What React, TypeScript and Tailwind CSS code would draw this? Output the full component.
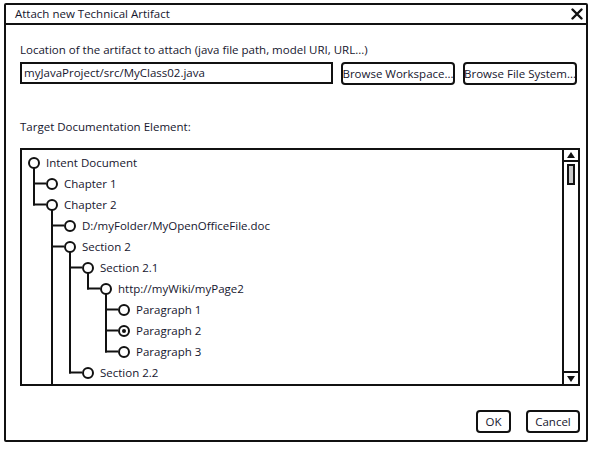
import React from "react";

type Row = {
  label: string;
  level: number;
  // one entry per ancestor column: "v" = line continues, "" = blank
  trail: string[];
  // connector for the row itself: "tee" or "end"
  joint?: "tee" | "end";
  selected?: boolean;
};

const rows: Row[] = [
  { label: "Intent Document", level: 0, trail: [] },
  { label: "Chapter 1", level: 1, trail: [], joint: "tee" },
  { label: "Chapter 2", level: 1, trail: [], joint: "end" },
  { label: "D:/myFolder/MyOpenOfficeFile.doc", level: 2, trail: [""], joint: "tee" },
  { label: "Section 2", level: 2, trail: [""], joint: "tee" },
  { label: "Section 2.1", level: 3, trail: ["", "v"], joint: "tee" },
  { label: "http://myWiki/myPage2", level: 4, trail: ["", "v", "v"], joint: "end" },
  { label: "Paragraph 1", level: 5, trail: ["", "v", "v", ""], joint: "tee" },
  { label: "Paragraph 2", level: 5, trail: ["", "v", "v", ""], joint: "tee", selected: true },
  { label: "Paragraph 3", level: 5, trail: ["", "v", "v", ""], joint: "end" },
  { label: "Section 2.2", level: 3, trail: ["", "v"], joint: "end" },
];

const Cell = ({ kind }: { kind: string }) => (
  <svg width="18" height="21" className="shrink-0 overflow-visible">
    {kind === "v" && <line x1="6" y1="-1" x2="6" y2="22" stroke="#111" strokeWidth="2" />}
    {kind === "tee" && (
      <>
        <line x1="6" y1="-5" x2="6" y2="22" stroke="#111" strokeWidth="2" />
        <line x1="6" y1="10.5" x2="18" y2="10.5" stroke="#111" strokeWidth="2" />
      </>
    )}
    {kind === "end" && (
      <>
        <line x1="6" y1="-5" x2="6" y2="11.5" stroke="#111" strokeWidth="2" />
        <line x1="5" y1="10.5" x2="18" y2="10.5" stroke="#111" strokeWidth="2" />
      </>
    )}
  </svg>
);

const Radio = ({ on }: { on?: boolean }) => (
  <span className="w-[12px] h-[12px] shrink-0 rounded-full border-2 border-[#111] bg-white flex items-center justify-center">
    {on && <span className="w-[4px] h-[4px] rounded-full bg-[#111]" />}
  </span>
);

const SketchButton = ({ children, className }: { children: React.ReactNode; className?: string }) => (
  <button
    className={`h-[23px] border-2 border-[#111] rounded-[4px] bg-white text-[11.5px] leading-none whitespace-nowrap flex items-center justify-center ${className ?? ""}`}
  >
    {children}
  </button>
);

export default function App() {
  return (
    <div className="w-[593px] h-[449px] bg-white pt-[3px] pl-[4px] text-[#16162e]" style={{ fontFamily: "'Open Sans', Lato, sans-serif" }}>
      <div className="w-[584px] h-[439px] border-2 border-[#111] rounded-[2px] flex flex-col">
        {/* TITLE */}
        <div className="h-[20px] border-b-2 border-[#111] flex items-center justify-between pl-[9px] pr-[3px]">
          <span className="text-[11.5px] leading-none">Attach new Technical Artifact</span>
          <svg width="12" height="12" viewBox="0 0 12 12">
            <path d="M1.5 1.5 L10.5 10.5 M10.5 1.5 L1.5 10.5" stroke="#111" strokeWidth="2.4" strokeLinecap="round" />
          </svg>
        </div>

        <div className="pl-[14px] pt-[17px] flex flex-col">
          <p className="text-[11.5px] leading-[16px]">Location of the artifact to attach (java file path, model URI, URL...)</p>

          <div className="flex items-start mt-[4px]">
            <div className="w-[313px] h-[22px] border-2 border-[#111] flex items-center pl-[2px] text-[11.5px]">
              myJavaProject/src/MyClass02.java
            </div>
            <SketchButton className="w-[114px] ml-[8px]">Browse Workspace...</SketchButton>
            <SketchButton className="w-[114px] ml-[8px]">Browse File System...</SketchButton>
          </div>

          <p className="text-[11.5px] leading-[16px] mt-[34px]">Target Documentation Element:</p>

          {/* TREE */}
          <div className="w-[560px] h-[238px] mt-[13px] border-2 border-[#111] flex overflow-hidden">
            <div className="flex-1 pt-[2px] pl-[6px] overflow-hidden">
              {rows.map((row) => (
                <div key={row.label} className="h-[21px] flex items-center">
                  {row.trail.map((t, i) => (
                    <Cell key={i} kind={t} />
                  ))}
                  {row.joint && <Cell kind={row.joint} />}
                  <Radio on={row.selected} />
                  <span className="ml-[6px] text-[11.5px] leading-none whitespace-nowrap">{row.label}</span>
                </div>
              ))}
              {/* continuation of the Chapter 2 branch below the fold */}
              <div className="h-[21px] flex items-center">
                <Cell kind="" />
                <Cell kind="v" />
              </div>
            </div>

            {/* scrollbar */}
            <div className="w-[16px] border-l-2 border-[#111] flex flex-col">
              <div className="h-[12px] border-b-2 border-[#111] flex items-center justify-center">
                <svg width="8" height="6" viewBox="0 0 8 6">
                  <path d="M0 6 L4 0 L8 6 Z" fill="#111" />
                </svg>
              </div>
              <div className="mt-[2px] mx-auto w-[8px] h-[21px] border-2 border-[#111] bg-[#c8c8c8]" />
              <div className="flex-1" />
              <div className="h-[13px] border-t-2 border-[#111] flex items-center justify-center">
                <svg width="8" height="6" viewBox="0 0 8 6">
                  <path d="M0 0 L8 0 L4 6 Z" fill="#111" />
                </svg>
              </div>
            </div>
          </div>

          <div className="flex justify-end w-[560px] mt-[24px]">
            <SketchButton className="w-[35px]">OK</SketchButton>
            <SketchButton className="w-[54px] ml-[15px]">Cancel</SketchButton>
          </div>
        </div>
      </div>
    </div>
  );
}
